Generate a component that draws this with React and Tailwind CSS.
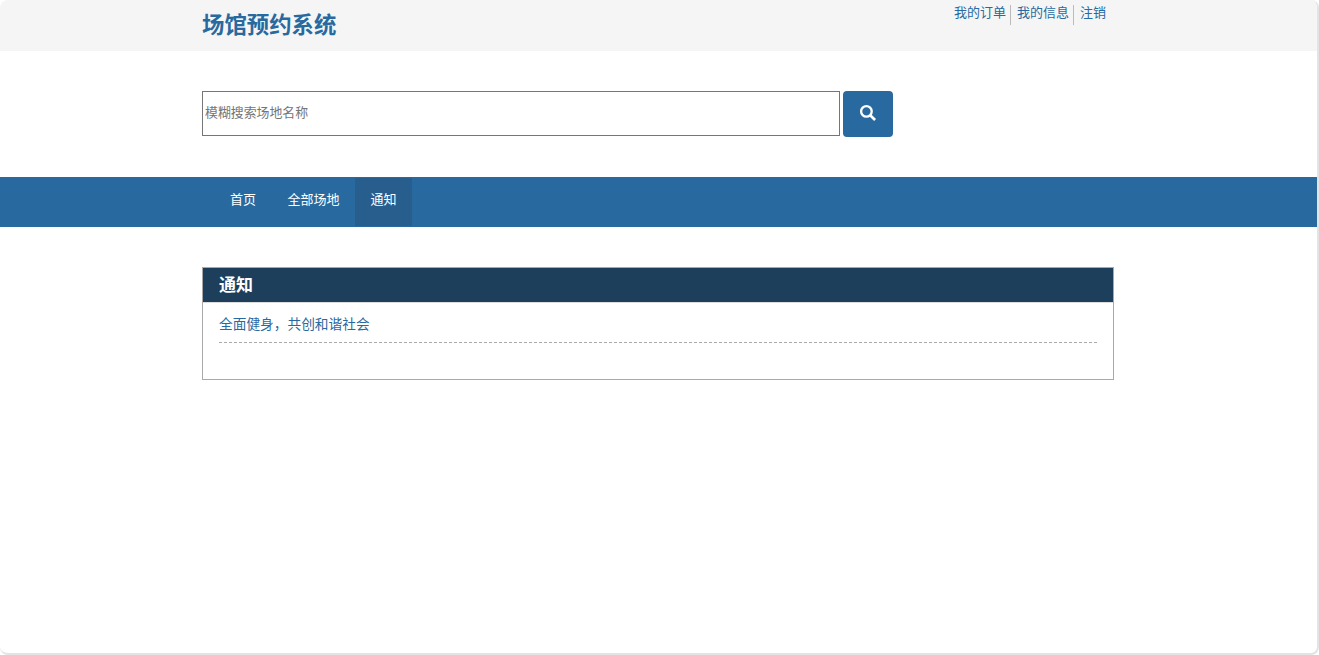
import React from 'react';

const fontStack = "font-['Liberation_Sans','Noto_Sans_CJK_SC',sans-serif]";

const App = () => {
    return (
        <div className={`${fontStack} w-[1319px] h-[655px] bg-white overflow-hidden`}>
            <div className="w-[1319px] h-[655px] bg-white rounded-lg border-r-2 border-b-2 border-[#e3e3e3] overflow-hidden">
                {/* top bar */}
                <div className="h-[51px] bg-[#f5f5f5]">
                    <div className="w-[912px] ml-[202px] flex justify-between">
                        <h1 className="mt-[11px] text-[22.4px] leading-[30px] font-bold text-[#286a9f]">场馆预约系统</h1>
                        <div className="flex items-start mt-[4px] mr-[8px] text-[13px] leading-[18px] text-[#286a9f]">
                            <a className="pr-[4px] border-r border-[#bbbbbb] h-[20px] mt-px leading-[16px]">我的订单</a>
                            <a className="pl-[6px] pr-[4px] border-r border-[#bbbbbb] h-[20px] mt-px leading-[16px]">我的信息</a>
                            <a className="pl-[6px] mt-px leading-[16px]">注销</a>
                        </div>
                    </div>
                </div>

                {/* search */}
                <div className="ml-[202px] mt-[40px] flex items-start gap-[3px]">
                    <input
                        placeholder="模糊搜索场地名称"
                        className="w-[638px] h-[45px] pl-[2px] pb-[2px] border border-[#767676] text-[12.9px] outline-none placeholder:text-[#757575]"
                    />
                    <button className="w-[50px] h-[46px] bg-[#286a9f] rounded-[4px] flex items-center justify-center">
                        <svg width="18" height="18" viewBox="0 0 17 17" className="-mt-[3px]">
                            <circle cx="7" cy="7" r="5" fill="none" stroke="#fff" strokeWidth="2.2" />
                            <path d="M10.6 10.6 L15.2 15" stroke="#fff" strokeWidth="2.6" />
                        </svg>
                    </button>
                </div>

                {/* nav */}
                <div className="mt-[40px] h-[50px] bg-[#286a9f] py-px">
                    <div className="ml-[214px] flex text-[13px] text-white h-[48px] leading-[44px]">
                        <a className="pl-[16px] pr-[15.5px]">首页</a>
                        <a className="px-[16px] pr-[15.5px]">全部场地</a>
                        <a className="w-[57px] bg-[#285e8e] text-center">通知</a>
                    </div>
                </div>

                {/* notice panel */}
                <div className="ml-[202px] mt-[40px] w-[912px] h-[113px] border border-[#a9a9a9]">
                    <div className="h-[34px] bg-[#1d3f5b] px-[16px] text-[17px] leading-[36px] font-bold text-white">通知</div>
                    <div className="border-t border-[#dddddd] px-[16px]">
                        <div className="h-[40px] pt-[12px] border-b border-dashed border-[#aaaaaa] text-[13.7px] leading-[20px] text-[#286a9f]">
                            全面健身，共创和谐社会
                        </div>
                    </div>
                </div>
            </div>
        </div>
    );
};

export default App;
